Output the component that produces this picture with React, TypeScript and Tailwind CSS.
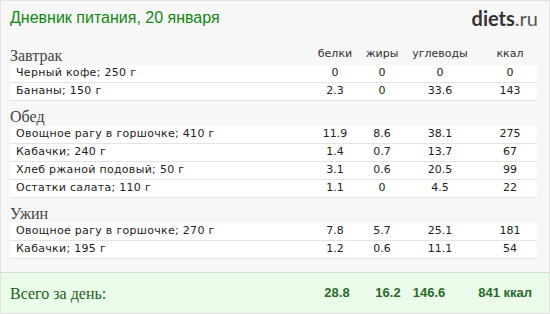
import React from "react";

type Item = { name: string; p: string; f: string; c: string; k: string };
type Meal = { title: string; items: Item[] };

const meals: Meal[] = [
  {
    title: "Завтрак",
    items: [
      { name: "Черный кофе; 250 г", p: "0", f: "0", c: "0", k: "0" },
      { name: "Бананы; 150 г", p: "2.3", f: "0", c: "33.6", k: "143" },
    ],
  },
  {
    title: "Обед",
    items: [
      { name: "Овощное рагу в горшочке; 410 г", p: "11.9", f: "8.6", c: "38.1", k: "275" },
      { name: "Кабачки; 240 г", p: "1.4", f: "0.7", c: "13.7", k: "67" },
      { name: "Хлеб ржаной подовый; 50 г", p: "3.1", f: "0.6", c: "20.5", k: "99" },
      { name: "Остатки салата; 110 г", p: "1.1", f: "0", c: "4.5", k: "22" },
    ],
  },
  {
    title: "Ужин",
    items: [
      { name: "Овощное рагу в горшочке; 270 г", p: "7.8", f: "5.7", c: "25.1", k: "181" },
      { name: "Кабачки; 195 г", p: "1.2", f: "0.6", c: "11.1", k: "54" },
    ],
  },
];

const serif = "font-['Liberation_Serif',serif]";

function MealBlock({ meal, first }: { meal: Meal; first: boolean }) {
  return (
    <div>
      <div className="flex h-[24px] items-end">
        <div className={`flex-1 text-[16px] leading-[19px] text-[#444] ${serif}`}>{meal.title}</div>
        {first && (
          <div className="flex text-[11px] leading-[22px] text-[#333]">
            <div className="w-[50px] text-center">белки</div>
            <div className="w-[44px] text-center">жиры</div>
            <div className="w-[72px] text-center">углеводы</div>
            <div className="w-[61px] pl-[7px] text-center">ккал</div>
          </div>
        )}
      </div>
      {meal.items.map((it) => (
        <div
          key={it.name}
          className="flex h-[18px] items-center border-b border-[#e4e4e4] bg-white text-[11px] text-[#222]"
        >
          <div className="flex-1 pl-[6px] tracking-[0.3px]">{it.name}</div>
          <div className="w-[50px] text-center">{it.p}</div>
          <div className="w-[44px] text-center">{it.f}</div>
          <div className="w-[72px] text-center">{it.c}</div>
          <div className="w-[61px] pl-[7px] text-center">{it.k}</div>
        </div>
      ))}
    </div>
  );
}

export default function App() {
  return (
    <div className="flex h-[314px] w-[550px] flex-col border border-[#e2e2e2] bg-[#f7f7f7] font-['DejaVu_Sans',sans-serif]">
      <div className="flex h-[34px] items-center justify-between pl-[9px] pr-[11px]">
        <div className="font-['Liberation_Sans',sans-serif] text-[16px] text-[#118811]">
          Дневник питания, 20 января
        </div>
        <div className="font-['Lato',sans-serif] text-[20px] leading-none text-[#333]">
          <span className="font-bold">diets</span>
          <span className="text-[#555]">.ru</span>
        </div>
      </div>
      <div className="mt-[6px] flex flex-col gap-[1px] pl-[9px] pr-[12px]">
        {meals.map((m, i) => (
          <MealBlock key={m.title} meal={m} first={i === 0} />
        ))}
      </div>
      <div className="mt-auto flex h-[41px] items-center border-t border-[#dadada] bg-[#eafbea] pl-[9px] pr-[12px]">
        <div className={`flex-1 pt-[2px] text-[16px] text-[#1c5e1c] ${serif}`}>Всего за день:</div>
        <div className="flex font-['Liberation_Sans',sans-serif] text-[13px] font-bold text-[#2a6a2a]">
          <div className="w-[54px] text-center">28.8</div>
          <div className="w-[48px] text-center">16.2</div>
          <div className="w-[34px] text-center">146.6</div>
          <div className="w-[91px] pr-[5px] text-right">841 ккал</div>
        </div>
      </div>
    </div>
  );
}
